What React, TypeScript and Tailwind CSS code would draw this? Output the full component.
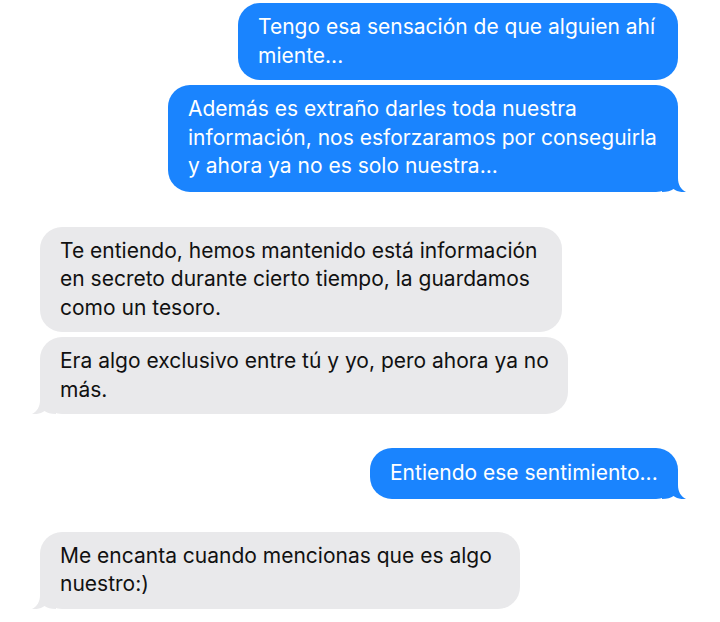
import React from "react";

type Msg = { side: "me" | "them"; lines: string[]; cls: string; tail: boolean; row: string };

const msgs: Msg[] = [
  { side: "me", lines: ["Tengo esa sensación de que alguien ahí", "miente..."], cls: "w-[440px]", tail: false, row: "mt-[3px]" },
  { side: "me", lines: ["Además es extraño darles toda nuestra", "información, nos esforzaramos por conseguirla", "y ahora ya no es solo nuestra..."], cls: "w-[510px] pb-[11px]", tail: true, row: "mt-[5px]" },
  { side: "them", lines: ["Te entiendo, hemos mantenido está información", "en secreto durante cierto tiempo, la guardamos", "como un tesoro."], cls: "w-[522px]", tail: false, row: "mt-[35px]" },
  { side: "them", lines: ["Era algo exclusivo entre tú y yo, pero ahora ya no", "más."], cls: "w-[528px]", tail: true, row: "mt-[5px]" },
  { side: "me", lines: ["Entiendo ese sentimiento..."], cls: "w-[308px] py-[11px]", tail: true, row: "mt-[34px]" },
  { side: "them", lines: ["Me encanta cuando mencionas que es algo", "nuestro:)"], cls: "w-[480px]", tail: true, row: "mt-[33px]" },
];

function Tail({ side }: { side: "me" | "them" }) {
  return (
    <svg
      width="24"
      height="24"
      viewBox="0 0 24 24"
      className={
        side === "me"
          ? "absolute right-[-8px] bottom-0 fill-[#1a84fe]"
          : "absolute left-[-8px] bottom-0 -scale-x-100 fill-[#e9e9eb]"
      }
    >
      <path d="M16 0 L16 10 C16 17 19 21.5 24 24 C19 24.6 14.5 23.2 11.5 21 C9 22.8 5 24 0 24 L0 0 Z" />
    </svg>
  );
}

export default function App() {
  return (
    <div className="w-[720px] h-[622px] bg-white overflow-hidden flex flex-col pl-[40px] pr-[42px] font-['Inter','Liberation_Sans',sans-serif]">
      {msgs.map((m, i) => (
        <div key={i} className={(m.side === "me" ? "flex justify-end " : "flex justify-start ") + m.row}>
          <div
            className={
              (m.side === "me"
                ? "relative rounded-[22px] bg-[#1a84fe] text-white px-[20px] py-[10px] text-[21px] leading-[28.5px] "
                : "relative rounded-[22px] bg-[#e9e9eb] text-[#111111] px-[20px] py-[10px] text-[21px] leading-[28.5px] ") + m.cls
            }
          >
            {m.lines.map((l, j) => (
              <div key={j} className="whitespace-nowrap relative z-10">{l}</div>
            ))}
            {m.tail && <Tail side={m.side} />}
          </div>
        </div>
      ))}
    </div>
  );
}
